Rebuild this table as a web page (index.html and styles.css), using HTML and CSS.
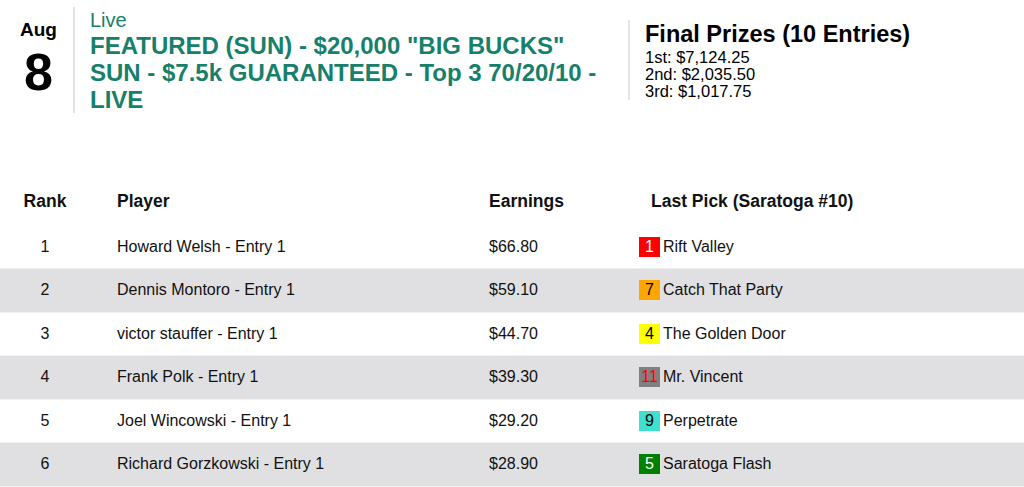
FILE: index.html
```html
<!DOCTYPE html>
<html>
<head>
<meta charset="utf-8">
<link rel="stylesheet" href="styles.css">
</head>
<body>
<header class="top">
  <div class="date">
    <div class="month">Aug</div>
    <div class="day">8</div>
  </div>
  <div class="event">
    <div class="status">Live</div>
    <div class="title">FEATURED (SUN) - $20,000 "BIG BUCKS" SUN - $7.5k GUARANTEED - Top 3 70/20/10 - LIVE</div>
  </div>
  <div class="prizes">
    <div class="prizes-title">Final Prizes (10 Entries)</div>
    <div class="prize">1st: $7,124.25</div>
    <div class="prize">2nd: $2,035.50</div>
    <div class="prize">3rd: $1,017.75</div>
  </div>
</header>
<table class="board">
  <colgroup>
    <col class="c-rank"><col class="c-player"><col class="c-earn"><col>
  </colgroup>
  <thead>
    <tr>
      <th class="rank">Rank</th>
      <th class="player">Player</th>
      <th class="earn">Earnings</th>
      <th class="pick">Last Pick (Saratoga #10)</th>
    </tr>
  </thead>
  <tbody>
    <tr>
      <td class="rank">1</td><td class="player">Howard Welsh - Entry 1</td><td class="earn">$66.80</td>
      <td class="pick"><span class="badge b-red">1</span>Rift Valley</td>
    </tr>
    <tr class="alt">
      <td class="rank">2</td><td class="player">Dennis Montoro - Entry 1</td><td class="earn">$59.10</td>
      <td class="pick"><span class="badge b-orange">7</span>Catch That Party</td>
    </tr>
    <tr>
      <td class="rank">3</td><td class="player">victor stauffer - Entry 1</td><td class="earn">$44.70</td>
      <td class="pick"><span class="badge b-yellow">4</span>The Golden Door</td>
    </tr>
    <tr class="alt">
      <td class="rank">4</td><td class="player">Frank Polk - Entry 1</td><td class="earn">$39.30</td>
      <td class="pick"><span class="badge b-grey">11</span>Mr. Vincent</td>
    </tr>
    <tr>
      <td class="rank">5</td><td class="player">Joel Wincowski - Entry 1</td><td class="earn">$29.20</td>
      <td class="pick"><span class="badge b-teal">9</span>Perpetrate</td>
    </tr>
    <tr class="alt">
      <td class="rank">6</td><td class="player">Richard Gorzkowski - Entry 1</td><td class="earn">$28.90</td>
      <td class="pick"><span class="badge b-green">5</span>Saratoga Flash</td>
    </tr>
  </tbody>
</table>
</body>
</html>
```
FILE: styles.css
```css
html, body {
  margin: 0;
  padding: 0;
  background: #fff;
  color: #111;
  font-family: "Liberation Sans", Arial, sans-serif;
}

.top {
  display: flex;
  align-items: flex-start;
  padding-top: 7px;
}

.date {
  width: 69px;
  padding-left: 4px;
  padding-top: 13px;
  text-align: center;
  font-weight: bold;
  color: #000;
}

.month {
  font-size: 19px;
  line-height: 20px;
}

.day {
  font-size: 52px;
  line-height: 52px;
  margin-top: 6px;
}

.event {
  width: 520px;
  border-left: 2px solid #e4e4e4;
  padding: 1px 18px 0 15px;
  color: #17806a;
}

.status {
  font-size: 20px;
  line-height: 24px;
}

.title {
  font-size: 24px;
  line-height: 27px;
  font-weight: bold;
}

.prizes {
  margin-top: 13px;
  border-left: 2px solid #e4e4e4;
  padding-left: 15px;
  color: #000;
}

.prizes-title {
  font-size: 23.5px;
  line-height: 29px;
  font-weight: bold;
}

.prize {
  font-size: 16.5px;
  line-height: 17px;
}

.board {
  width: 100%;
  margin-top: 67.5px;
  border-collapse: collapse;
  table-layout: fixed;
}

.c-rank { width: 90px; }
.c-player { width: 399px; }
.c-earn { width: 150px; }

.board th {
  height: 41px;
  padding: 0 0 4px 0;
  font-size: 17.5px;
  font-weight: bold;
  text-align: left;
  color: #111;
  vertical-align: middle;
}

.board td {
  height: 42.5px;
  padding: 0;
  font-size: 16px;
  line-height: 20px;
  color: #111;
  vertical-align: middle;
  border-bottom: 1px solid #f1f1f2;
}

.board tr.alt td {
  background: #e0e0e2;
}

.board .rank {
  text-align: center;
}

.board .player {
  padding-left: 27px;
}

.board th.pick {
  padding-left: 12px;
}

.badge {
  display: inline-block;
  width: 21px;
  height: 20px;
  line-height: 20px;
  text-align: center;
  font-family: "Liberation Sans", Arial, sans-serif;
  font-size: 16px;
  margin-right: 3px;
  vertical-align: baseline;
}

.b-red { background: #fe0000; color: #fff; }
.b-orange { background: #ffa500; color: #000; }
.b-yellow { background: #ffff00; color: #000; }
.b-grey { background: #808080; color: #ff0000; }
.b-teal { background: #40e0d0; color: #000; }
.b-green { background: #008000; color: #fff; }
```
